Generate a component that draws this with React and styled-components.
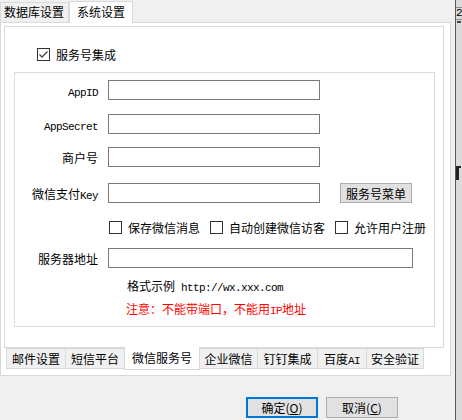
import { createGlobalStyle, styled } from "styled-components"

const GlobalStyle = createGlobalStyle`
  html, body {
    margin: 0;
    padding: 0;
    background: #f0f0f0;
  }
  body {
    font-family: "Noto Sans CJK SC", "Microsoft YaHei", sans-serif;
    font-size: 12px;
    color: #000;
    width: 462px;
    height: 420px;
    overflow: hidden;
  }
`

const Window = styled.div`
  display: flex;
  width: 462px;
  height: 420px;
`

const Main = styled.div`
  width: 455px;
  display: flex;
  flex-direction: column;
`

const RightEdge = styled.div`
  width: 6px;
  border-left: 1px solid #5a5a5a;
  background: #dadada;
  overflow: hidden;
  display: flex;
  flex-direction: column;
  white-space: nowrap;
`

const EdgeBox = styled.div`
  margin-top: 7px;
  height: 11px;
  border-top: 1px solid #888;
  border-bottom: 1px solid #888;
  font-family: "Liberation Mono", monospace;
  font-size: 11px;
  line-height: 11px;
`

const EdgeMark = styled.div`
  margin: 1px 0 0 1px;
  width: 4px;
  height: 2px;
  background: #444;
`

const EdgeGlyph = styled.div`
  margin-top: 141px;
  width: 6px;
  height: 18px;
  overflow: hidden;
`

const GlyphPiece = styled.span`
  display: block;
  width: 5px;
  height: 14px;
  margin-top: 2px;
  border-left: 3px solid #222;
  border-top: 2px solid #222;
  box-sizing: border-box;
`

const TopTabs = styled.div`
  display: flex;
  align-items: flex-end;
  height: 22px;
`

const TopTab = styled.div`
  box-sizing: border-box;
  width: ${p => p.$w}px;
  height: ${p => (p.$active ? 22 : 20)}px;
  line-height: ${p => (p.$active ? 20 : 18)}px;
  padding-left: ${p => p.$pl}px;
  border: 1px solid #d9d9d9;
  border-bottom: none;
  background: ${p => (p.$active ? "#fff" : "#f0f0f0")};
  margin-bottom: ${p => (p.$active ? "-1px" : "0")};
  position: relative;
  z-index: ${p => (p.$active ? 1 : 0)};
`

const OuterPanel = styled.div`
  box-sizing: border-box;
  width: 451px;
  height: 354px;
  border: 1px solid #d9d9d9;
  background: #fff;
  padding: 3px 5px 0 3px;
`

const InnerPage = styled.div`
  box-sizing: border-box;
  width: 440px;
  height: 322px;
  border: 1px solid #d9d9d9;
  background: #fff;
  padding: 21px 0 0 9px;
`

const BottomTabs = styled.div`
  display: flex;
  align-items: flex-start;
  padding-left: 2px;
  margin-top: -1px;
`

const BottomTab = styled.div`
  box-sizing: border-box;
  width: ${p => p.$w}px;
  height: ${p => (p.$active ? 23 : 21)}px;
  margin-top: ${p => (p.$active ? 0 : 1)}px;
  line-height: ${p => (p.$active ? 22 : 19)}px;
  text-align: center;
  border: 1px solid #d9d9d9;
  border-top: ${p => (p.$active ? "none" : "1px solid #d9d9d9")};
  margin-right: -1px;
  background: ${p => (p.$active ? "#fff" : "#f0f0f0")};
  position: relative;
  z-index: ${p => (p.$active ? 1 : 0)};
`

const CheckRow = styled.div`
  display: flex;
  align-items: center;
  padding-left: ${p => p.$pl || 0}px;
  margin-top: ${p => p.$mt || 0}px;
  height: 13px;
`

const Box = styled.span`
  box-sizing: border-box;
  width: 13px;
  height: 13px;
  border: 1px solid #333;
  background: #fff;
  display: inline-flex;
  align-items: center;
  justify-content: center;
  flex: none;
`

const CheckLabel = styled.span`
  margin-left: 6px;
  margin-right: ${p => p.$mr || 0}px;
  line-height: 13px;
  white-space: nowrap;
`

const Group = styled.div`
  box-sizing: border-box;
  width: 421px;
  height: 255px;
  margin-top: 11px;
  border: 1px solid #dcdcdc;
  padding-top: 7px;
`

const FieldRow = styled.div`
  display: flex;
  align-items: center;
  height: 20px;
  margin-top: ${p => p.$mt || 0}px;
`

const Label = styled.div`
  width: 83px;
  margin-right: 10px;
  text-align: right;
  white-space: nowrap;
`

const Mono = styled.span`
  font-family: "Liberation Mono", "DejaVu Sans Mono", monospace;
  font-size: 11px;
  letter-spacing: -0.6px;
`

const Input = styled.div`
  box-sizing: border-box;
  width: ${p => p.$w}px;
  height: 20px;
  border: 1px solid #7a7a7a;
  background: #fff;
`

const Button = styled.div`
  box-sizing: border-box;
  width: 72px;
  height: ${p => p.$h || 20}px;
  margin-left: ${p => p.$ml || 0}px;
  border: ${p => (p.$default ? "2px solid #0078d7" : "1px solid #adadad")};
  background: #e1e1e1;
  display: flex;
  align-items: center;
  justify-content: center;
  white-space: nowrap;
`

const Note = styled.div`
  padding-left: ${p => p.$pl}px;
  margin-top: ${p => p.$mt}px;
  line-height: 16px;
  color: ${p => p.$color || "#000"};
  white-space: nowrap;
`

const Footer = styled.div`
  display: flex;
  justify-content: flex-end;
  padding: 21px 57px 0 0;
`

const Check = ({ checked }) => (
  <Box>
    {checked && (
      <svg width="11" height="11" viewBox="0 0 11 11">
        <path d="M1.5 5.5 L4 8 L9.5 2.5" fill="none" stroke="#444" strokeWidth="1.3" />
      </svg>
    )}
  </Box>
)

export default function App() {
  return (
    <Window>
      <GlobalStyle />
      <Main>
        <TopTabs>
          <TopTab $w={69} $pl={3}>数据库设置</TopTab>
          <TopTab $w={64} $pl={7} $active>系统设置</TopTab>
        </TopTabs>
        <OuterPanel>
          <InnerPage>
            <CheckRow $pl={23}>
              <Check checked />
              <CheckLabel>服务号集成</CheckLabel>
            </CheckRow>
            <Group>
              <FieldRow>
                <Label><Mono>AppID</Mono></Label>
                <Input $w={212} />
              </FieldRow>
              <FieldRow $mt={14}>
                <Label><Mono>AppSecret</Mono></Label>
                <Input $w={212} />
              </FieldRow>
              <FieldRow $mt={13}>
                <Label>商户号</Label>
                <Input $w={212} />
              </FieldRow>
              <FieldRow $mt={16}>
                <Label>微信支付<Mono>Key</Mono></Label>
                <Input $w={212} />
                <Button $ml={20}>服务号菜单</Button>
              </FieldRow>
              <CheckRow $pl={94} $mt={18}>
                <Check />
                <CheckLabel $mr={10}>保存微信消息</CheckLabel>
                <Check />
                <CheckLabel $mr={10}>自动创建微信访客</CheckLabel>
                <Check />
                <CheckLabel>允许用户注册</CheckLabel>
              </CheckRow>
              <FieldRow $mt={14}>
                <Label>服务器地址</Label>
                <Input $w={305} />
              </FieldRow>
              <Note $pl={112} $mt={10}>
                格式示例<Mono> http://wx.xxx.com</Mono>
              </Note>
              <Note $pl={111} $mt={5} $color="#ff0000">
                注意：不能带端口，不能用<Mono>IP</Mono>地址
              </Note>
            </Group>
          </InnerPage>
          <BottomTabs>
            <BottomTab $w={60}>邮件设置</BottomTab>
            <BottomTab $w={60}>短信平台</BottomTab>
            <BottomTab $w={76} $active>微信服务号</BottomTab>
            <BottomTab $w={59}>企业微信</BottomTab>
            <BottomTab $w={61}>钉钉集成</BottomTab>
            <BottomTab $w={50}>百度<Mono>AI</Mono></BottomTab>
            <BottomTab $w={58}>安全验证</BottomTab>
          </BottomTabs>
        </OuterPanel>
        <Footer>
          <Button $default $h={21}>确定(<u>O</u>)</Button>
          <Button $h={21} $ml={8}>取消(<u>C</u>)</Button>
        </Footer>
      </Main>
      <RightEdge>
        <EdgeBox>2</EdgeBox>
        <EdgeMark />
        <EdgeGlyph><GlyphPiece /></EdgeGlyph>
      </RightEdge>
    </Window>
  )
}
